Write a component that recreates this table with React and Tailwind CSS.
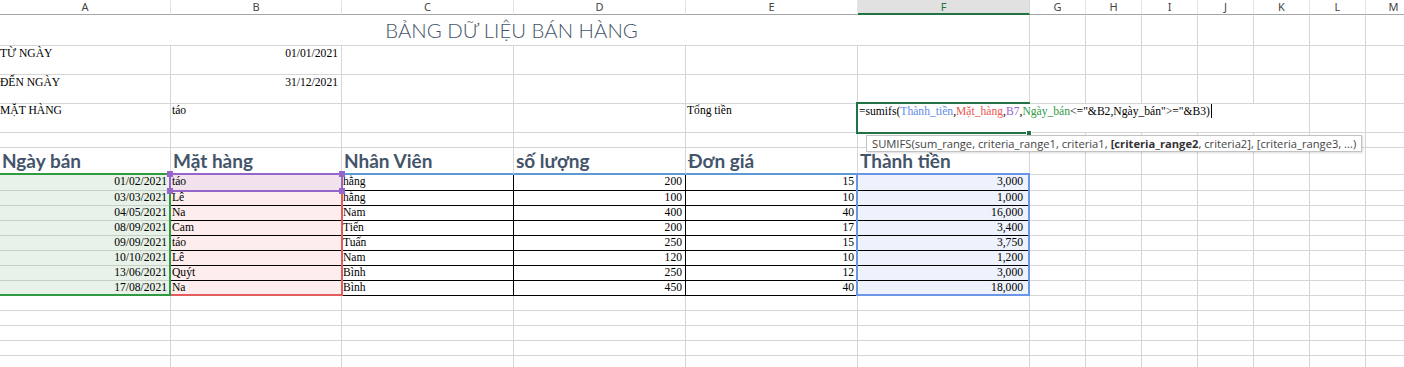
import React from "react";
import clsx from "clsx";

// gridline + fonts shared by the sheet cells
const GRID = "shrink-0 border-r border-b border-[#d6d6d6]";
const SERIF = "font-['Liberation_Serif',serif] text-[11.6px] leading-[14px] text-black";
const HEAD = "font-['Lato',sans-serif] font-bold text-[19px] leading-[23px] text-[#44546a]";

const W = {
  A: "w-[171px]",
  B: "w-[171px]",
  C: "w-[172px]",
  D: "w-[172px]",
  E: "w-[172px]",
  F: "w-[172px]",
  S: "w-[56px]",
};

const letters = ["A", "B", "C", "D", "E", "F", "G", "H", "I", "J", "K", "L", "M"];
const small = ["G", "H", "I", "J", "K", "L", "M"];

const sales = [
  ["01/02/2021", "táo", "hằng", "200", "15", "3,000"],
  ["03/03/2021", "Lê", "hằng", "100", "10", "1,000"],
  ["04/05/2021", "Na", "Nam", "400", "40", "16,000"],
  ["08/09/2021", "Cam", "Tiến", "200", "17", "3,400"],
  ["09/09/2021", "táo", "Tuấn", "250", "15", "3,750"],
  ["10/10/2021", "Lê", "Nam", "120", "10", "1,200"],
  ["13/06/2021", "Quýt", "Bình", "250", "12", "3,000"],
  ["17/08/2021", "Na", "Bình", "450", "40", "18,000"],
];

function Blank({ w, className, children }) {
  return <div className={clsx(GRID, w, className)}>{children}</div>;
}

function Tail() {
  return small.map((k) => <Blank key={k} w={W.S} />);
}

function Handle({ className }) {
  return <div className={clsx("absolute h-[6px] w-[6px] bg-[#9565c9]", className)} />;
}

export default function App() {
  return (
    <div className="relative h-[367px] w-[1404px] overflow-hidden bg-white">
      {/* column headers */}
      <div className="flex h-[15px] font-['Noto_Sans',sans-serif] text-[11px] leading-[13px] text-[#444]">
        {letters.map((l, i) => (
          <div
            key={l}
            className={clsx(
              "flex shrink-0 justify-center border-r",
              i < 6 ? W[l] : W.S,
              l === "F"
                ? "border-b-2 border-r-[#d6d6d6] border-b-[#217346] bg-[#e1e1e1] text-[#217346]"
                : "border-b border-r-[#e4e4e4] border-b-[#a6a6a6]"
            )}
          >
            {l}
          </div>
        ))}
      </div>

      {/* row 1: merged title */}
      <div className="flex h-[31px]">
        <Blank
          w="w-[1030px]"
          className="pr-[6px] pt-[3px] text-center font-['Lato',sans-serif] text-[20.4px] font-light leading-[24px] text-[#44546a]"
        >
          BẢNG DỮ LIỆU BÁN HÀNG
        </Blank>
        <Tail />
      </div>

      {/* rows 2-3: date range */}
      <div className={clsx("flex h-[29px]", SERIF)}>
        <Blank w={W.A} className="pt-[1px]">TỪ NGÀY</Blank>
        <Blank w={W.B} className="pr-[3px] pt-[1px] text-right">01/01/2021</Blank>
        <Blank w={W.C} />
        <Blank w={W.D} />
        <Blank w={W.E} />
        <Blank w={W.F} />
        <Tail />
      </div>
      <div className={clsx("flex h-[29px]", SERIF)}>
        <Blank w={W.A} className="pt-[1px]">ĐẾN NGÀY</Blank>
        <Blank w={W.B} className="pr-[3px] pt-[1px] text-right">31/12/2021</Blank>
        <Blank w={W.C} />
        <Blank w={W.D} />
        <Blank w={W.E} />
        <Blank w={W.F} />
        <Tail />
      </div>

      {/* row 4: item filter + total */}
      <div className={clsx("flex h-[29px]", SERIF)}>
        <Blank w={W.A}>MẶT HÀNG</Blank>
        <Blank w={W.B} className="pl-[1px]">táo</Blank>
        <Blank w={W.C} />
        <Blank w={W.D} />
        <Blank w={W.E} className="pl-[1px]">Tổng tiền</Blank>
        <Blank w={W.F} />
        <Tail />
      </div>

      {/* row 5 */}
      <div className="flex h-[15px]">
        <Blank w={W.A} />
        <Blank w={W.B} />
        <Blank w={W.C} />
        <Blank w={W.D} />
        <Blank w={W.E} />
        <Blank w={W.F} />
        <Tail />
      </div>

      {/* row 6: table headings */}
      <div className={clsx("flex h-[27px]", HEAD)}>
        {[
          ["Ngày bán", W.A],
          ["Mặt hàng", W.B],
          ["Nhân Viên", W.C],
          ["số lượng", W.D],
          ["Đơn giá", W.E],
          ["Thành tiền", W.F],
        ].map(([t, w]) => (
          <div key={t} className={clsx("shrink-0 border-r border-b-2 border-r-[#d6d6d6] border-b-[#5b9bd5] pl-[2px] pt-[1px]", w)}>
            {t}
          </div>
        ))}
        <Tail />
      </div>

      {/* rows 7-14: sales data */}
      {sales.map((r, i) => (
        <div key={i} className={clsx("flex", i === 0 ? "h-[16px]" : "h-[15px]", SERIF)}>
          <div className={clsx("shrink-0 border-r border-b border-[#c7d0c7] bg-[#e8f2e8] pr-[3px] text-right", W.A)}>{r[0]}</div>
          <div className={clsx("shrink-0 border-r border-b border-black pl-[1px]", W.B, i === 0 ? "bg-[#f1e2ec]" : "bg-[#fdeded]")}>
            {r[1]}
          </div>
          <div className={clsx("shrink-0 border-r border-b border-black pl-[1px]", W.C)}>{r[2]}</div>
          <div className={clsx("shrink-0 border-r border-b border-black pr-[3px] text-right", W.D)}>{r[3]}</div>
          <div className={clsx("shrink-0 border-r border-b border-black pr-[3px] text-right", W.E)}>{r[4]}</div>
          <div className={clsx("shrink-0 border-r border-b border-black bg-[#edf2fd] pr-[6px] text-right", W.F)}>{r[5]}</div>
          <Tail />
        </div>
      ))}

      {/* empty rows below */}
      {[0, 1, 2, 3, 4].map((k) => (
        <div key={k} className="flex h-[15px]">
          <Blank w={W.A} />
          <Blank w={W.B} />
          <Blank w={W.C} />
          <Blank w={W.D} />
          <Blank w={W.E} />
          <Blank w={W.F} />
          <Tail />
        </div>
      ))}

      {/* reference highlights for the SUMIFS arguments */}
      <div className="pointer-events-none absolute left-[169px] top-[173px] h-[123px] w-[174px] border-2 border-[#e35c5c]" />
      <div className="pointer-events-none absolute left-[-2px] top-[173px] h-[123px] w-[173px] border-2 border-[#2f9a3f]" />
      <div className="pointer-events-none absolute left-[856px] top-[173px] h-[123px] w-[174px] border-2 border-[#6b95e6]" />
      <div className="pointer-events-none absolute left-[169px] top-[173px] h-[19px] w-[174px] border-2 border-[#9565c9]">
        <Handle className="-left-[4px] -top-[4px]" />
        <Handle className="-right-[4px] -top-[4px]" />
        <Handle className="-bottom-[4px] -left-[4px]" />
        <Handle className="-bottom-[4px] -right-[4px]" />
      </div>

      {/* in-cell editor on F4 */}
      <div className={clsx("absolute left-[858px] top-[104px] h-[28px] w-[396px] bg-white pl-[1px] whitespace-nowrap", SERIF)}>
        =sumifs(<span className="text-[#5f8be8]">Thành_tiền</span>,<span className="text-[#ec5555]">Mặt_hàng</span>,
        <span className="text-[#9b62cc]">B7</span>,<span className="text-[#2f9a45]">Ngày_bán</span>&lt;="&amp;B2,Ngày_bán"&gt;="&amp;B3)
        <span className="ml-[1px] inline-block h-[14px] w-px bg-black align-[-3px]" />
      </div>
      <div className="pointer-events-none absolute left-[856px] top-[102px] h-[32px] w-[174px] border-y-2 border-l-2 border-[#217346]" />
      <div className="absolute left-[1026px] top-[130px] h-[6px] w-[6px] border border-white bg-[#217346]" />

      {/* function argument tip */}
      <div className="absolute left-[866px] top-[135px] flex h-[17px] items-center border border-[#c2c2c2] bg-white px-[5px] font-['Open_Sans',sans-serif] text-[11.2px] leading-[15px] text-[#444] shadow-[1px_1px_2px_rgba(0,0,0,0.15)] whitespace-nowrap">
        SUMIFS(sum_range, criteria_range1, criteria1, <b className="ml-[3px] font-bold text-[#333]">[criteria_range2</b>, criteria2], [criteria_range3, ...)
      </div>
    </div>
  );
}
